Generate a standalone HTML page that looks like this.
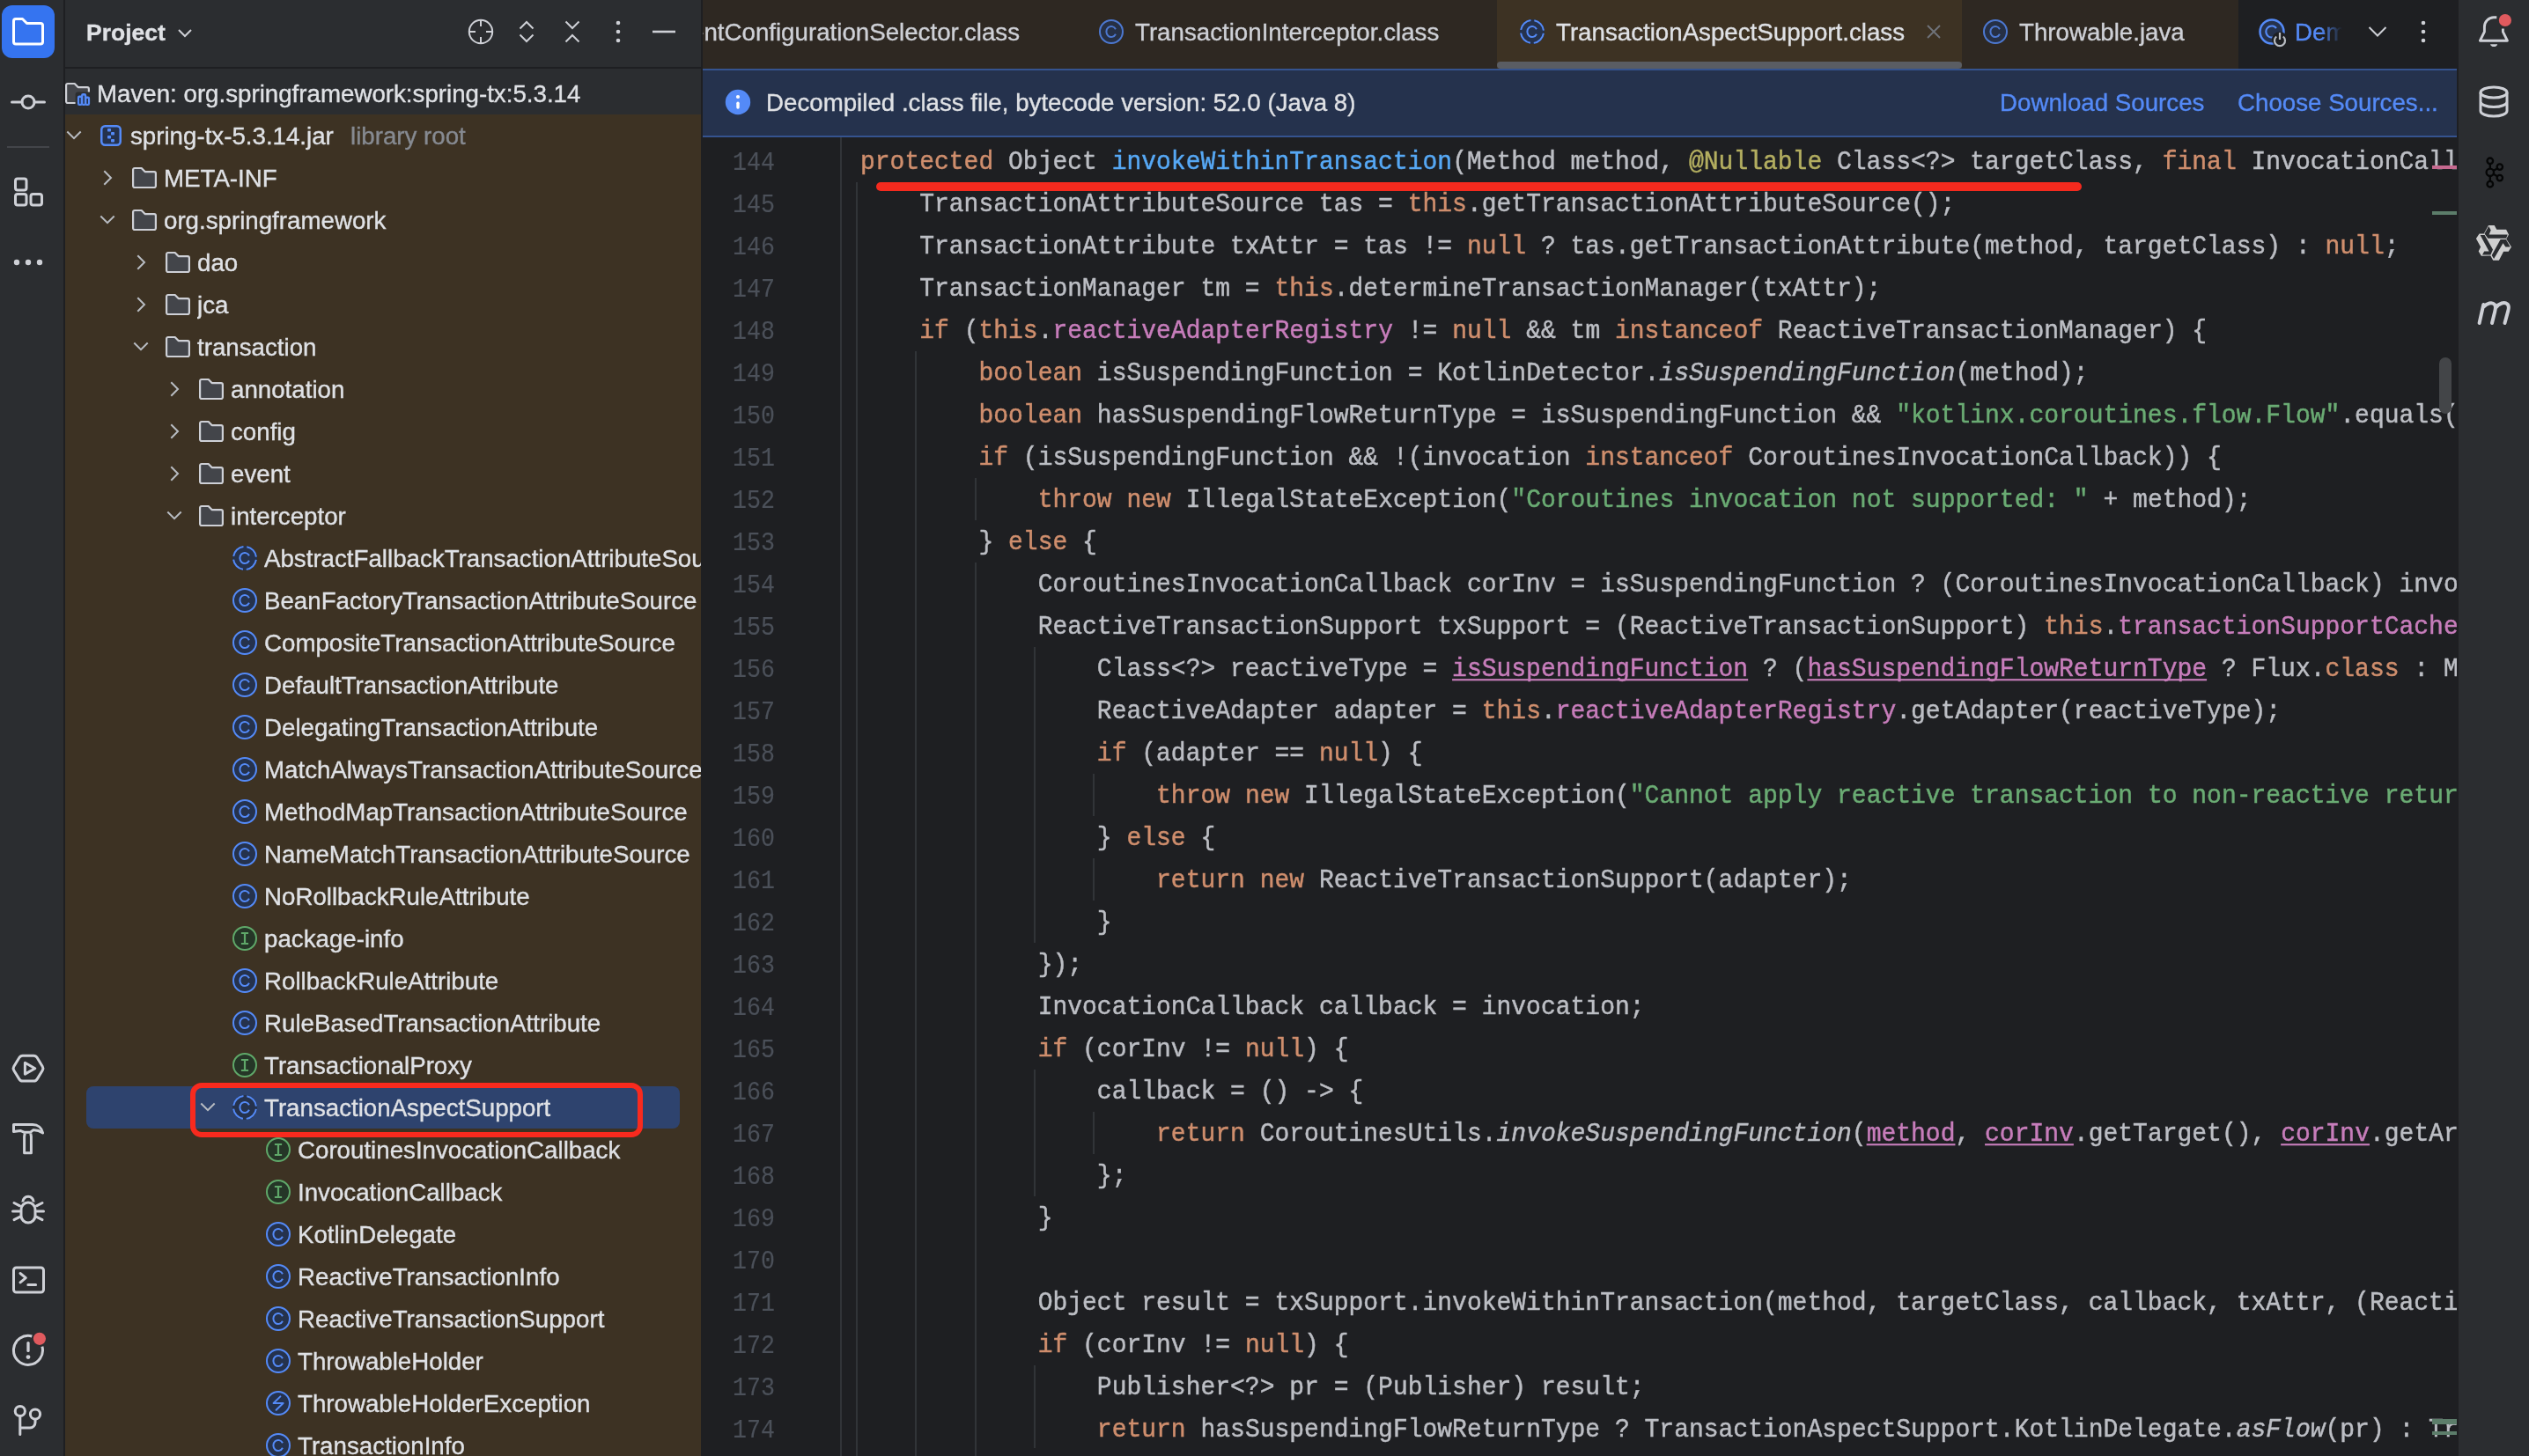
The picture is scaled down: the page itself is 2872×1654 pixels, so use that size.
<!DOCTYPE html><html><head><meta charset="utf-8"><style>
html,body{margin:0;padding:0;width:2872px;height:1654px;overflow:hidden;background:#1E1F22;}
.k{color:#CF8E6D} .d{color:#BCBEC4} .m{color:#56A8F5} .f{color:#C77DBB} .s{color:#6AAB73} .a{color:#B3AE60} .i{font-style:italic}
.cl{position:absolute;left:0;height:48px;white-space:pre;transform:scaleY(1.07);transform-origin:0 31.5px;-webkit-text-stroke:0.45px currentColor}
.u{color:#C77DBB;text-decoration:underline;text-underline-offset:3px;text-decoration-thickness:2px;text-decoration-skip-ink:none}
</style></head><body>
<div id="root" style="position:absolute;left:0;top:0;width:2872px;height:1654px;overflow:hidden;will-change:transform;-webkit-text-stroke:0.35px currentColor">

<svg width="0" height="0" style="position:absolute">
<defs>
<symbol id="folder" viewBox="0 0 32 32"><path d="M3.1 6.8a1.8 1.8 0 0 1 1.8-1.8H12.7l3.9 4.1H27.1a1.8 1.8 0 0 1 1.8 1.8V25.2a1.8 1.8 0 0 1-1.8 1.8H4.9a1.8 1.8 0 0 1-1.8-1.8z" fill="#43454A" stroke="#CED0D6" stroke-width="2.2" stroke-linejoin="round"/></symbol>
<symbol id="cls" viewBox="0 0 32 32"><circle cx="16" cy="16" r="13" fill="#25324D" stroke="#548AF7" stroke-width="2"/><path d="M20.95 13.2A5.6 6 0 1 0 20.95 18.8" fill="none" stroke="#548AF7" stroke-width="2"/></symbol>
<symbol id="abs" viewBox="0 0 32 32"><circle cx="16" cy="16" r="14" fill="#25324D"/><circle cx="16" cy="16" r="13" fill="none" stroke="#548AF7" stroke-width="2" stroke-dasharray="16.42 4" stroke-dashoffset="18.42"/><path d="M20.95 13.2A5.6 6 0 1 0 20.95 18.8" fill="none" stroke="#548AF7" stroke-width="2"/></symbol>
<symbol id="ifc" viewBox="0 0 32 32"><circle cx="16" cy="16" r="13" fill="#253627" stroke="#5FA869" stroke-width="2"/><path d="M11.9 10H20.1M16 10V22M11.9 22H20.1" fill="none" stroke="#5FA869" stroke-width="2.2"/></symbol>
<symbol id="exc" viewBox="0 0 32 32"><circle cx="16" cy="16" r="13" fill="#25324D" stroke="#548AF7" stroke-width="2"/><path d="M18.4 8.4L10.6 16H21.6L13.6 23.8" fill="none" stroke="#548AF7" stroke-width="2" stroke-linejoin="round" stroke-linecap="round"/></symbol>
<symbol id="chd" viewBox="0 0 32 32"><path d="M8.3 11.5L16 19.2L23.7 11.5" fill="none" stroke="#B8BCC2" stroke-width="2"/></symbol>
<symbol id="chr" viewBox="0 0 32 32"><path d="M12.3 8.3L20 16L12.3 23.7" fill="none" stroke="#B8BCC2" stroke-width="2"/></symbol>
</defs></svg><div style="position:absolute;left:0px;top:0px;width:72px;height:1654px;background:#2B2D30"></div><div style="position:absolute;left:72px;top:0px;width:2px;height:1654px;background:#1E1F22"></div><svg style="position:absolute;left:0px;top:0px;width:72px;height:1654px;" viewBox="0 0 72 1654">
<rect x="2" y="6" width="60" height="60" rx="12" fill="#3574F0"/>
<path d="M15.5 24a2.5 2.5 0 0 1 2.5-2.5h7.5l5 5h15.5a2.5 2.5 0 0 1 2.5 2.5V47.5a2.5 2.5 0 0 1-2.5 2.5H18a2.5 2.5 0 0 1-2.5-2.5z" fill="none" stroke="#fff" stroke-width="3" stroke-linejoin="round"/>
<circle cx="32" cy="116" r="7" fill="none" stroke="#CED0D6" stroke-width="3"/>
<path d="M13.5 116H25M39 116H50.5" stroke="#CED0D6" stroke-width="3" stroke-linecap="round"/>
<path d="M8 167H56" stroke="#43454A" stroke-width="2"/>
<rect x="17.5" y="203" width="12.5" height="13" rx="2.5" fill="none" stroke="#CED0D6" stroke-width="3"/>
<rect x="17.5" y="220.5" width="12.5" height="12.5" rx="2.5" fill="none" stroke="#CED0D6" stroke-width="3"/>
<rect x="35" y="220.5" width="12.5" height="12.5" rx="2.5" fill="none" stroke="#CED0D6" stroke-width="3"/>
<circle cx="19" cy="298" r="3.2" fill="#CED0D6"/><circle cx="32" cy="298" r="3.2" fill="#CED0D6"/><circle cx="45" cy="298" r="3.2" fill="#CED0D6"/>
<path d="M25.80 1199.30L38.20 1199.30Q40.80 1199.30 42.16 1201.52L48.24 1211.48Q49.60 1213.70 48.24 1215.92L42.16 1225.88Q40.80 1228.10 38.20 1228.10L25.80 1228.10Q23.20 1228.10 21.84 1225.88L15.76 1215.92Q14.40 1213.70 15.76 1211.48L21.84 1201.52Q23.20 1199.30 25.80 1199.30Z" fill="none" stroke="#CED0D6" stroke-width="3" stroke-linejoin="round"/>
<path d="M28.4 1207.3L39.8 1213.7L28.4 1220.1Z" fill="none" stroke="#CED0D6" stroke-width="3" stroke-linejoin="round"/>
<path d="M15.5 1277.6H37C43 1277.6 47.5 1281 48.6 1287C45 1284.6 41 1283.6 37.6 1283.8L34.6 1286.2H27.2L23 1284.4L15.5 1285.6Z" fill="none" stroke="#CED0D6" stroke-width="3" stroke-linejoin="round"/>
<path d="M28.2 1287.5L27.6 1291V1309.8H35.4V1291L34.8 1287.5" fill="none" stroke="#CED0D6" stroke-width="3" stroke-linejoin="round"/>
<path d="M25.8 1365.5A6.2 6.2 0 0 1 38.2 1365.5" fill="none" stroke="#CED0D6" stroke-width="3"/>
<rect x="24" y="1366" width="16" height="23" rx="8" fill="none" stroke="#CED0D6" stroke-width="3"/>
<path d="M16 1366.5L22.5 1369.8M14.5 1376H22M16 1385.6L22.5 1382.4M48 1366.5L41.5 1369.8M49.5 1376H42M48 1385.6L41.5 1382.4" stroke="#CED0D6" stroke-width="3" stroke-linecap="round"/>
<rect x="15.5" y="1440" width="34" height="28" rx="3" fill="none" stroke="#CED0D6" stroke-width="3"/>
<path d="M23 1446.5L29.3 1451.6L23 1456.8M31.8 1459.5H40.6" fill="none" stroke="#CED0D6" stroke-width="3" stroke-linecap="round" stroke-linejoin="round"/>
<path d="M36.3 1518A16.5 16.5 0 1 0 47.9 1529.7" fill="none" stroke="#CED0D6" stroke-width="3"/>
<path d="M32 1525.6V1534.4" stroke="#CED0D6" stroke-width="3.3" stroke-linecap="round"/><circle cx="32" cy="1541.6" r="2.4" fill="#CED0D6"/>
<circle cx="44.9" cy="1520.8" r="7.1" fill="#E05A5E"/>
<circle cx="22.8" cy="1603" r="5.6" fill="none" stroke="#CED0D6" stroke-width="3"/>
<circle cx="40" cy="1606.6" r="5.6" fill="none" stroke="#CED0D6" stroke-width="3"/>
<path d="M22.8 1608.6V1629.5M22.8 1622H34A6 6 0 0 0 40 1616V1612.2" fill="none" stroke="#CED0D6" stroke-width="3" stroke-linecap="round"/>
</svg><div style="position:absolute;left:74px;top:0px;width:722px;height:1654px;background:#2B2D30"></div><div style="position:absolute;left:74px;top:130px;width:722px;height:1524px;background:#3D3223"></div><div style="position:absolute;left:74px;top:76px;width:722px;height:2px;background:#1E1F22"></div><div style="position:absolute;left:796px;top:0px;width:2px;height:1654px;background:#1E1F22"></div><div style="position:absolute;left:98px;top:13px;width:200px;height:48px;font:bold 26.5px/48px 'Liberation Sans', sans-serif;color:#DFE1E5">Project</div><svg style="position:absolute;left:74px;top:0px;width:722px;height:76px;" viewBox="74 0 722 76">
<path d="M203 34L210 41L217 34" fill="none" stroke="#CED0D6" stroke-width="2"/>
<circle cx="546" cy="36" r="13.2" fill="none" stroke="#CED0D6" stroke-width="2"/>
<path d="M546 22.8V30M546 42V49.2M532.8 36H540M552 36H559.2" stroke="#CED0D6" stroke-width="2"/>
<path d="M590.5 32.5L598 25L605.5 32.5M590.5 39.5L598 47L605.5 39.5" fill="none" stroke="#CED0D6" stroke-width="2"/>
<path d="M642.5 24.5L650 32L657.5 24.5M642.5 47.5L650 40L657.5 47.5" fill="none" stroke="#CED0D6" stroke-width="2"/>
<circle cx="702" cy="26" r="2.3" fill="#CED0D6"/><circle cx="702" cy="36" r="2.3" fill="#CED0D6"/><circle cx="702" cy="46" r="2.3" fill="#CED0D6"/>
<path d="M741 36H767" stroke="#CED0D6" stroke-width="2.6"/>
</svg><div style="position:absolute;left:98px;top:1234px;width:674px;height:48px;background:#2E436E;border-radius:8px"></div><div style="position:absolute;left:74px;top:0px;width:722px;height:1654px;overflow:hidden"><div style="position:absolute;left:-74px;top:0;width:796px;height:1654px"><svg style="position:absolute;left:72px;top:90px;width:32px;height:32px;" viewBox="0 0 32 32"><path d="M3.1 6.8a1.8 1.8 0 0 1 1.8-1.8H12.7l3.9 4.1H27.1a1.8 1.8 0 0 1 1.8 1.8V25.2a1.8 1.8 0 0 1-1.8 1.8H4.9a1.8 1.8 0 0 1-1.8-1.8z" fill="#43454A" stroke="#CED0D6" stroke-width="2.2" stroke-linejoin="round"/>
<rect x="13.6" y="14.6" width="19" height="18" rx="3" fill="#2B2D30"/>
<rect x="15.9" y="18.6" width="6" height="11.4" rx="2.2" fill="#548AF7"/><rect x="20" y="16" width="6.2" height="14" rx="2.4" fill="#548AF7"/><rect x="24.2" y="19.6" width="5.9" height="10.4" rx="2.2" fill="#548AF7"/>
<rect x="18.1" y="21" width="1.6" height="6.8" fill="#25324D"/><rect x="22.3" y="18.6" width="1.6" height="9.2" fill="#25324D"/><rect x="26.4" y="22" width="1.6" height="5.8" fill="#25324D"/></svg><div style="position:absolute;left:110px;top:83px;width:686px;height:48px;font:27.7px/48px 'Liberation Sans', sans-serif;color:#DFE1E5;white-space:pre;overflow:hidden">Maven: org.springframework:spring-tx:5.3.14</div><svg style="position:absolute;left:68px;top:138px;width:32px;height:32px;" viewBox="0 0 32 32"><use href="#chd"/></svg><svg style="position:absolute;left:110px;top:138px;width:32px;height:32px;" viewBox="0 0 32 32"><rect x="5.25" y="5.25" width="21.5" height="21.5" rx="4" fill="#25324D" stroke="#548AF7" stroke-width="2.5"/>
<rect x="12" y="8" width="4" height="3.6" rx="0.8" fill="#548AF7"/><rect x="16" y="12" width="4" height="3.6" rx="0.8" fill="#548AF7"/><rect x="12" y="16" width="4" height="3.6" rx="0.8" fill="#548AF7"/><rect x="16" y="20" width="4" height="3.6" rx="0.8" fill="#548AF7"/></svg><div style="position:absolute;left:398px;top:131px;width:300px;height:48px;font:27.7px/48px 'Liberation Sans', sans-serif;color:#868A91;white-space:pre">library root</div><div style="position:absolute;left:148px;top:131px;width:648px;height:48px;font:27.7px/48px 'Liberation Sans', sans-serif;color:#DFE1E5;white-space:pre;overflow:hidden">spring-tx-5.3.14.jar</div><svg style="position:absolute;left:106px;top:186px;width:32px;height:32px;" viewBox="0 0 32 32"><use href="#chr"/></svg><svg style="position:absolute;left:148px;top:186px;width:32px;height:32px;" viewBox="0 0 32 32"><use href="#folder"/></svg><div style="position:absolute;left:186px;top:179px;width:610px;height:48px;font:27.7px/48px 'Liberation Sans', sans-serif;color:#DFE1E5;white-space:pre;overflow:hidden">META-INF</div><svg style="position:absolute;left:106px;top:234px;width:32px;height:32px;" viewBox="0 0 32 32"><use href="#chd"/></svg><svg style="position:absolute;left:148px;top:234px;width:32px;height:32px;" viewBox="0 0 32 32"><use href="#folder"/></svg><div style="position:absolute;left:186px;top:227px;width:610px;height:48px;font:27.7px/48px 'Liberation Sans', sans-serif;color:#DFE1E5;white-space:pre;overflow:hidden">org.springframework</div><svg style="position:absolute;left:144px;top:282px;width:32px;height:32px;" viewBox="0 0 32 32"><use href="#chr"/></svg><svg style="position:absolute;left:186px;top:282px;width:32px;height:32px;" viewBox="0 0 32 32"><use href="#folder"/></svg><div style="position:absolute;left:224px;top:275px;width:572px;height:48px;font:27.7px/48px 'Liberation Sans', sans-serif;color:#DFE1E5;white-space:pre;overflow:hidden">dao</div><svg style="position:absolute;left:144px;top:330px;width:32px;height:32px;" viewBox="0 0 32 32"><use href="#chr"/></svg><svg style="position:absolute;left:186px;top:330px;width:32px;height:32px;" viewBox="0 0 32 32"><use href="#folder"/></svg><div style="position:absolute;left:224px;top:323px;width:572px;height:48px;font:27.7px/48px 'Liberation Sans', sans-serif;color:#DFE1E5;white-space:pre;overflow:hidden">jca</div><svg style="position:absolute;left:144px;top:378px;width:32px;height:32px;" viewBox="0 0 32 32"><use href="#chd"/></svg><svg style="position:absolute;left:186px;top:378px;width:32px;height:32px;" viewBox="0 0 32 32"><use href="#folder"/></svg><div style="position:absolute;left:224px;top:371px;width:572px;height:48px;font:27.7px/48px 'Liberation Sans', sans-serif;color:#DFE1E5;white-space:pre;overflow:hidden">transaction</div><svg style="position:absolute;left:182px;top:426px;width:32px;height:32px;" viewBox="0 0 32 32"><use href="#chr"/></svg><svg style="position:absolute;left:224px;top:426px;width:32px;height:32px;" viewBox="0 0 32 32"><use href="#folder"/></svg><div style="position:absolute;left:262px;top:419px;width:534px;height:48px;font:27.7px/48px 'Liberation Sans', sans-serif;color:#DFE1E5;white-space:pre;overflow:hidden">annotation</div><svg style="position:absolute;left:182px;top:474px;width:32px;height:32px;" viewBox="0 0 32 32"><use href="#chr"/></svg><svg style="position:absolute;left:224px;top:474px;width:32px;height:32px;" viewBox="0 0 32 32"><use href="#folder"/></svg><div style="position:absolute;left:262px;top:467px;width:534px;height:48px;font:27.7px/48px 'Liberation Sans', sans-serif;color:#DFE1E5;white-space:pre;overflow:hidden">config</div><svg style="position:absolute;left:182px;top:522px;width:32px;height:32px;" viewBox="0 0 32 32"><use href="#chr"/></svg><svg style="position:absolute;left:224px;top:522px;width:32px;height:32px;" viewBox="0 0 32 32"><use href="#folder"/></svg><div style="position:absolute;left:262px;top:515px;width:534px;height:48px;font:27.7px/48px 'Liberation Sans', sans-serif;color:#DFE1E5;white-space:pre;overflow:hidden">event</div><svg style="position:absolute;left:182px;top:570px;width:32px;height:32px;" viewBox="0 0 32 32"><use href="#chd"/></svg><svg style="position:absolute;left:224px;top:570px;width:32px;height:32px;" viewBox="0 0 32 32"><use href="#folder"/></svg><div style="position:absolute;left:262px;top:563px;width:534px;height:48px;font:27.7px/48px 'Liberation Sans', sans-serif;color:#DFE1E5;white-space:pre;overflow:hidden">interceptor</div><svg style="position:absolute;left:262px;top:618px;width:32px;height:32px;" viewBox="0 0 32 32"><use href="#abs"/></svg><div style="position:absolute;left:300px;top:611px;width:496px;height:48px;font:27.7px/48px 'Liberation Sans', sans-serif;color:#DFE1E5;white-space:pre;overflow:hidden">AbstractFallbackTransactionAttributeSource</div><svg style="position:absolute;left:262px;top:666px;width:32px;height:32px;" viewBox="0 0 32 32"><use href="#cls"/></svg><div style="position:absolute;left:300px;top:659px;width:496px;height:48px;font:27.7px/48px 'Liberation Sans', sans-serif;color:#DFE1E5;white-space:pre;overflow:hidden">BeanFactoryTransactionAttributeSource</div><svg style="position:absolute;left:262px;top:714px;width:32px;height:32px;" viewBox="0 0 32 32"><use href="#cls"/></svg><div style="position:absolute;left:300px;top:707px;width:496px;height:48px;font:27.7px/48px 'Liberation Sans', sans-serif;color:#DFE1E5;white-space:pre;overflow:hidden">CompositeTransactionAttributeSource</div><svg style="position:absolute;left:262px;top:762px;width:32px;height:32px;" viewBox="0 0 32 32"><use href="#cls"/></svg><div style="position:absolute;left:300px;top:755px;width:496px;height:48px;font:27.7px/48px 'Liberation Sans', sans-serif;color:#DFE1E5;white-space:pre;overflow:hidden">DefaultTransactionAttribute</div><svg style="position:absolute;left:262px;top:810px;width:32px;height:32px;" viewBox="0 0 32 32"><use href="#cls"/></svg><div style="position:absolute;left:300px;top:803px;width:496px;height:48px;font:27.7px/48px 'Liberation Sans', sans-serif;color:#DFE1E5;white-space:pre;overflow:hidden">DelegatingTransactionAttribute</div><svg style="position:absolute;left:262px;top:858px;width:32px;height:32px;" viewBox="0 0 32 32"><use href="#cls"/></svg><div style="position:absolute;left:300px;top:851px;width:496px;height:48px;font:27.7px/48px 'Liberation Sans', sans-serif;color:#DFE1E5;white-space:pre;overflow:hidden">MatchAlwaysTransactionAttributeSource</div><svg style="position:absolute;left:262px;top:906px;width:32px;height:32px;" viewBox="0 0 32 32"><use href="#cls"/></svg><div style="position:absolute;left:300px;top:899px;width:496px;height:48px;font:27.7px/48px 'Liberation Sans', sans-serif;color:#DFE1E5;white-space:pre;overflow:hidden">MethodMapTransactionAttributeSource</div><svg style="position:absolute;left:262px;top:954px;width:32px;height:32px;" viewBox="0 0 32 32"><use href="#cls"/></svg><div style="position:absolute;left:300px;top:947px;width:496px;height:48px;font:27.7px/48px 'Liberation Sans', sans-serif;color:#DFE1E5;white-space:pre;overflow:hidden">NameMatchTransactionAttributeSource</div><svg style="position:absolute;left:262px;top:1002px;width:32px;height:32px;" viewBox="0 0 32 32"><use href="#cls"/></svg><div style="position:absolute;left:300px;top:995px;width:496px;height:48px;font:27.7px/48px 'Liberation Sans', sans-serif;color:#DFE1E5;white-space:pre;overflow:hidden">NoRollbackRuleAttribute</div><svg style="position:absolute;left:262px;top:1050px;width:32px;height:32px;" viewBox="0 0 32 32"><use href="#ifc"/></svg><div style="position:absolute;left:300px;top:1043px;width:496px;height:48px;font:27.7px/48px 'Liberation Sans', sans-serif;color:#DFE1E5;white-space:pre;overflow:hidden">package-info</div><svg style="position:absolute;left:262px;top:1098px;width:32px;height:32px;" viewBox="0 0 32 32"><use href="#cls"/></svg><div style="position:absolute;left:300px;top:1091px;width:496px;height:48px;font:27.7px/48px 'Liberation Sans', sans-serif;color:#DFE1E5;white-space:pre;overflow:hidden">RollbackRuleAttribute</div><svg style="position:absolute;left:262px;top:1146px;width:32px;height:32px;" viewBox="0 0 32 32"><use href="#cls"/></svg><div style="position:absolute;left:300px;top:1139px;width:496px;height:48px;font:27.7px/48px 'Liberation Sans', sans-serif;color:#DFE1E5;white-space:pre;overflow:hidden">RuleBasedTransactionAttribute</div><svg style="position:absolute;left:262px;top:1194px;width:32px;height:32px;" viewBox="0 0 32 32"><use href="#ifc"/></svg><div style="position:absolute;left:300px;top:1187px;width:496px;height:48px;font:27.7px/48px 'Liberation Sans', sans-serif;color:#DFE1E5;white-space:pre;overflow:hidden">TransactionalProxy</div><svg style="position:absolute;left:220px;top:1242px;width:32px;height:32px;" viewBox="0 0 32 32"><use href="#chd"/></svg><svg style="position:absolute;left:262px;top:1242px;width:32px;height:32px;" viewBox="0 0 32 32"><use href="#abs"/></svg><div style="position:absolute;left:300px;top:1235px;width:496px;height:48px;font:27.7px/48px 'Liberation Sans', sans-serif;color:#DFE1E5;white-space:pre;overflow:hidden">TransactionAspectSupport</div><svg style="position:absolute;left:300px;top:1290px;width:32px;height:32px;" viewBox="0 0 32 32"><use href="#ifc"/></svg><div style="position:absolute;left:338px;top:1283px;width:458px;height:48px;font:27.7px/48px 'Liberation Sans', sans-serif;color:#DFE1E5;white-space:pre;overflow:hidden">CoroutinesInvocationCallback</div><svg style="position:absolute;left:300px;top:1338px;width:32px;height:32px;" viewBox="0 0 32 32"><use href="#ifc"/></svg><div style="position:absolute;left:338px;top:1331px;width:458px;height:48px;font:27.7px/48px 'Liberation Sans', sans-serif;color:#DFE1E5;white-space:pre;overflow:hidden">InvocationCallback</div><svg style="position:absolute;left:300px;top:1386px;width:32px;height:32px;" viewBox="0 0 32 32"><use href="#cls"/></svg><div style="position:absolute;left:338px;top:1379px;width:458px;height:48px;font:27.7px/48px 'Liberation Sans', sans-serif;color:#DFE1E5;white-space:pre;overflow:hidden">KotlinDelegate</div><svg style="position:absolute;left:300px;top:1434px;width:32px;height:32px;" viewBox="0 0 32 32"><use href="#cls"/></svg><div style="position:absolute;left:338px;top:1427px;width:458px;height:48px;font:27.7px/48px 'Liberation Sans', sans-serif;color:#DFE1E5;white-space:pre;overflow:hidden">ReactiveTransactionInfo</div><svg style="position:absolute;left:300px;top:1482px;width:32px;height:32px;" viewBox="0 0 32 32"><use href="#cls"/></svg><div style="position:absolute;left:338px;top:1475px;width:458px;height:48px;font:27.7px/48px 'Liberation Sans', sans-serif;color:#DFE1E5;white-space:pre;overflow:hidden">ReactiveTransactionSupport</div><svg style="position:absolute;left:300px;top:1530px;width:32px;height:32px;" viewBox="0 0 32 32"><use href="#cls"/></svg><div style="position:absolute;left:338px;top:1523px;width:458px;height:48px;font:27.7px/48px 'Liberation Sans', sans-serif;color:#DFE1E5;white-space:pre;overflow:hidden">ThrowableHolder</div><svg style="position:absolute;left:300px;top:1578px;width:32px;height:32px;" viewBox="0 0 32 32"><use href="#exc"/></svg><div style="position:absolute;left:338px;top:1571px;width:458px;height:48px;font:27.7px/48px 'Liberation Sans', sans-serif;color:#DFE1E5;white-space:pre;overflow:hidden">ThrowableHolderException</div><svg style="position:absolute;left:300px;top:1626px;width:32px;height:32px;" viewBox="0 0 32 32"><use href="#cls"/></svg><div style="position:absolute;left:338px;top:1619px;width:458px;height:48px;font:27.7px/48px 'Liberation Sans', sans-serif;color:#DFE1E5;white-space:pre;overflow:hidden">TransactionInfo</div></div></div><div style="position:absolute;left:216px;top:1230.3px;width:514px;height:61.3px;box-sizing:border-box;border:6px solid #F82A1E;border-radius:13px"></div><div style="position:absolute;left:798px;top:0px;width:1992px;height:78px;background:#1E1F22"></div><div style="position:absolute;left:798px;top:0px;width:1744px;height:78px;background:#2E2822"></div><div style="position:absolute;left:1700px;top:0px;width:528px;height:78px;background:#3D3223"></div><div style="position:absolute;left:1700px;top:70px;width:528px;height:8px;background:#5A5D63;border-radius:4px"></div><div style="position:absolute;left:798px;top:0px;width:600px;height:78px;overflow:hidden"><div style="position:absolute;left:-641px;top:13px;width:1001px;height:48px;font:27.7px/48px 'Liberation Sans', sans-serif;color:#CED0D6;white-space:pre;text-align:right">TransactionManagementConfigurationSelector.class</div></div><svg style="position:absolute;left:1246px;top:20px;width:32px;height:32px;opacity:0.82" viewBox="0 0 32 32"><use href="#cls"/></svg><div style="position:absolute;left:1289px;top:13px;width:420px;height:48px;font:27.7px/48px 'Liberation Sans', sans-serif;color:#CED0D6;white-space:pre">TransactionInterceptor.class</div><svg style="position:absolute;left:1724px;top:20px;width:32px;height:32px;" viewBox="0 0 32 32"><use href="#abs"/></svg><div style="position:absolute;left:1767px;top:13px;width:420px;height:48px;font:27.7px/48px 'Liberation Sans', sans-serif;color:#DFE1E5;white-space:pre">TransactionAspectSupport.class</div><svg style="position:absolute;left:2180px;top:20px;width:32px;height:32px;" viewBox="0 0 32 32"><path d="M9 9L23 23M23 9L9 23" stroke="#6F737A" stroke-width="1.9"/></svg><svg style="position:absolute;left:2250px;top:20px;width:32px;height:32px;opacity:0.82" viewBox="0 0 32 32"><use href="#cls"/></svg><div style="position:absolute;left:2293px;top:13px;width:260px;height:48px;font:27.7px/48px 'Liberation Sans', sans-serif;color:#CED0D6;white-space:pre">Throwable.java</div><svg style="position:absolute;left:2560px;top:16px;width:44px;height:44px;" viewBox="0 0 44 44"><circle cx="20" cy="20" r="13.5" fill="#25324D" stroke="#548AF7" stroke-width="2.5"/>
<path d="M25 16A6.5 6.5 0 1 0 21 26.4" fill="none" stroke="#548AF7" stroke-width="2.2"/>
<circle cx="29" cy="29" r="9" fill="#1E1F22"/><path d="M25.2 25.5A6 6 0 1 0 32.8 25.5" fill="none" stroke="#B8BCC2" stroke-width="2.2"/><path d="M29 21V29" stroke="#B8BCC2" stroke-width="2.2"/></svg><div style="position:absolute;left:2606px;top:13px;width:54px;height:48px;font:27.7px/48px 'Liberation Sans', sans-serif;color:#548AF7;white-space:pre;overflow:hidden;-webkit-mask-image:linear-gradient(90deg,#000 55%,rgba(0,0,0,0.15) 92%,transparent 100%)">Demo</div><svg style="position:absolute;left:2680px;top:0px;width:110px;height:78px;" viewBox="2680 0 110 78"><path d="M2690.5 31L2700 40.5L2709.5 31" fill="none" stroke="#CED0D6" stroke-width="2"/>
<circle cx="2752" cy="26" r="2.3" fill="#CED0D6"/><circle cx="2752" cy="36" r="2.3" fill="#CED0D6"/><circle cx="2752" cy="46" r="2.3" fill="#CED0D6"/></svg><div style="position:absolute;left:798px;top:78px;width:1992px;height:78px;box-sizing:border-box;background:#25324D;border-top:2px solid #35538F;border-bottom:2px solid #35538F"></div><svg style="position:absolute;left:822px;top:100px;width:32px;height:32px;" viewBox="0 0 32 32"><circle cx="16" cy="16" r="14.2" fill="#548AF7"/><circle cx="16" cy="10" r="2.1" fill="#fff"/><path d="M16 17.2V22.1" stroke="#fff" stroke-width="3.4" stroke-linecap="round"/></svg><div style="position:absolute;left:870px;top:93px;width:900px;height:48px;font:27.7px/48px 'Liberation Sans', sans-serif;color:#DFE1E5;white-space:pre">Decompiled .class file, bytecode version: 52.0 (Java 8)</div><div style="position:absolute;left:2271px;top:93px;width:260px;height:48px;font:27.7px/48px 'Liberation Sans', sans-serif;color:#548AF7;white-space:pre">Download Sources</div><div style="position:absolute;left:2541px;top:93px;width:260px;height:48px;font:27.7px/48px 'Liberation Sans', sans-serif;color:#548AF7;white-space:pre">Choose Sources...</div><div style="position:absolute;left:798px;top:156px;width:1994px;height:1498px;background:#1E1F22"></div><div style="position:absolute;left:954px;top:156px;width:2px;height:1498px;background:#313438"></div><div style="position:absolute;left:2790px;top:0px;width:2px;height:1654px;background:#1E1F22"></div><div style="position:absolute;left:798px;top:161px;width:1992px;height:1493px;overflow:hidden"><div style="position:absolute;left:179px;top:0;font:28px/48px 'Liberation Mono', monospace;color:#BCBEC4"><div class="cl" style="top:0px"><span class="k">protected</span><span class="d"> Object </span><span class="m">invokeWithinTransaction</span><span class="d">(Method method, </span><span class="a">@Nullable</span><span class="d"> Class&lt;?&gt; targetClass, </span><span class="k">final</span><span class="d"> InvocationCallback invocation) throws Throwable {</span></div><div class="cl" style="top:48px"><span class="d">    TransactionAttributeSource tas = </span><span class="k">this</span><span class="d">.getTransactionAttributeSource();</span></div><div class="cl" style="top:96px"><span class="d">    TransactionAttribute txAttr = tas != </span><span class="k">null</span><span class="d"> ? tas.getTransactionAttribute(method, targetClass) : </span><span class="k">null</span><span class="d">;</span></div><div class="cl" style="top:144px"><span class="d">    TransactionManager tm = </span><span class="k">this</span><span class="d">.determineTransactionManager(txAttr);</span></div><div class="cl" style="top:192px"><span class="d">    </span><span class="k">if</span><span class="d"> (</span><span class="k">this</span><span class="d">.</span><span class="f">reactiveAdapterRegistry</span><span class="d"> != </span><span class="k">null</span><span class="d"> &amp;&amp; tm </span><span class="k">instanceof</span><span class="d"> ReactiveTransactionManager) {</span></div><div class="cl" style="top:240px"><span class="d">        </span><span class="k">boolean</span><span class="d"> isSuspendingFunction = KotlinDetector.</span><span class="i">isSuspendingFunction</span><span class="d">(method);</span></div><div class="cl" style="top:288px"><span class="d">        </span><span class="k">boolean</span><span class="d"> hasSuspendingFlowReturnType = isSuspendingFunction &amp;&amp; </span><span class="s">&quot;kotlinx.coroutines.flow.Flow&quot;</span><span class="d">.equals(method.getReturnType().getName());</span></div><div class="cl" style="top:336px"><span class="d">        </span><span class="k">if</span><span class="d"> (isSuspendingFunction &amp;&amp; !(invocation </span><span class="k">instanceof</span><span class="d"> CoroutinesInvocationCallback)) {</span></div><div class="cl" style="top:384px"><span class="d">            </span><span class="k">throw</span><span class="d"> </span><span class="k">new</span><span class="d"> IllegalStateException(</span><span class="s">&quot;Coroutines invocation not supported: &quot;</span><span class="d"> + method);</span></div><div class="cl" style="top:432px"><span class="d">        } </span><span class="k">else</span><span class="d"> {</span></div><div class="cl" style="top:480px"><span class="d">            CoroutinesInvocationCallback corInv = isSuspendingFunction ? (CoroutinesInvocationCallback) invocation : </span><span class="k">null</span><span class="d">;</span></div><div class="cl" style="top:528px"><span class="d">            ReactiveTransactionSupport txSupport = (ReactiveTransactionSupport) </span><span class="k">this</span><span class="d">.</span><span class="f">transactionSupportCache</span><span class="d">.computeIfAbsent(method, (key) -&gt; {</span></div><div class="cl" style="top:576px"><span class="d">                Class&lt;?&gt; reactiveType = </span><span class="u">isSuspendingFunction</span><span class="d"> ? (</span><span class="u">hasSuspendingFlowReturnType</span><span class="d"> ? Flux.</span><span class="k">class</span><span class="d"> : Mono.</span><span class="k">class</span><span class="d">) : method.getReturnType();</span></div><div class="cl" style="top:624px"><span class="d">                ReactiveAdapter adapter = </span><span class="k">this</span><span class="d">.</span><span class="f">reactiveAdapterRegistry</span><span class="d">.getAdapter(reactiveType);</span></div><div class="cl" style="top:672px"><span class="d">                </span><span class="k">if</span><span class="d"> (adapter == </span><span class="k">null</span><span class="d">) {</span></div><div class="cl" style="top:720px"><span class="d">                    </span><span class="k">throw</span><span class="d"> </span><span class="k">new</span><span class="d"> IllegalStateException(</span><span class="s">&quot;Cannot apply reactive transaction to non-reactive return type: &quot;</span><span class="d"> + method.getReturnType());</span></div><div class="cl" style="top:768px"><span class="d">                } </span><span class="k">else</span><span class="d"> {</span></div><div class="cl" style="top:816px"><span class="d">                    </span><span class="k">return</span><span class="d"> </span><span class="k">new</span><span class="d"> ReactiveTransactionSupport(adapter);</span></div><div class="cl" style="top:864px"><span class="d">                }</span></div><div class="cl" style="top:912px"><span class="d">            });</span></div><div class="cl" style="top:960px"><span class="d">            InvocationCallback callback = invocation;</span></div><div class="cl" style="top:1008px"><span class="d">            </span><span class="k">if</span><span class="d"> (corInv != </span><span class="k">null</span><span class="d">) {</span></div><div class="cl" style="top:1056px"><span class="d">                callback = () -&gt; {</span></div><div class="cl" style="top:1104px"><span class="d">                    </span><span class="k">return</span><span class="d"> CoroutinesUtils.</span><span class="i">invokeSuspendingFunction</span><span class="d">(</span><span class="u">method</span><span class="d">, </span><span class="u">corInv</span><span class="d">.getTarget(), </span><span class="u">corInv</span><span class="d">.getArguments());</span></div><div class="cl" style="top:1152px"><span class="d">                };</span></div><div class="cl" style="top:1200px"><span class="d">            }</span></div><div class="cl" style="top:1248px"></div><div class="cl" style="top:1296px"><span class="d">            Object result = txSupport.invokeWithinTransaction(method, targetClass, callback, txAttr, (ReactiveTransactionManager) tm);</span></div><div class="cl" style="top:1344px"><span class="d">            </span><span class="k">if</span><span class="d"> (corInv != </span><span class="k">null</span><span class="d">) {</span></div><div class="cl" style="top:1392px"><span class="d">                Publisher&lt;?&gt; pr = (Publisher) result;</span></div><div class="cl" style="top:1440px"><span class="d">                </span><span class="k">return</span><span class="d"> hasSuspendingFlowReturnType ? TransactionAspectSupport.KotlinDelegate.</span><span class="i">asFlow</span><span class="d">(pr) : TransactionAspectSupport.KotlinDelegate.</span><span class="i">awaitSingleOrNull</span><span class="d">(pr, corInv.getArguments()[corInv.getArguments().length - 1]);</span></div></div></div><div style="position:absolute;left:800px;top:162px;width:80px;height:1500px;font:28px/48px 'Liberation Mono', monospace;color:#4B5059"><div style="position:absolute;left:0;top:0px;width:80px;height:48px;text-align:right;transform:scale(0.95,1.06);transform-origin:79px 31.5px;-webkit-text-stroke:0.15px currentColor">144</div><div style="position:absolute;left:0;top:48px;width:80px;height:48px;text-align:right;transform:scale(0.95,1.06);transform-origin:79px 31.5px;-webkit-text-stroke:0.15px currentColor">145</div><div style="position:absolute;left:0;top:96px;width:80px;height:48px;text-align:right;transform:scale(0.95,1.06);transform-origin:79px 31.5px;-webkit-text-stroke:0.15px currentColor">146</div><div style="position:absolute;left:0;top:144px;width:80px;height:48px;text-align:right;transform:scale(0.95,1.06);transform-origin:79px 31.5px;-webkit-text-stroke:0.15px currentColor">147</div><div style="position:absolute;left:0;top:192px;width:80px;height:48px;text-align:right;transform:scale(0.95,1.06);transform-origin:79px 31.5px;-webkit-text-stroke:0.15px currentColor">148</div><div style="position:absolute;left:0;top:240px;width:80px;height:48px;text-align:right;transform:scale(0.95,1.06);transform-origin:79px 31.5px;-webkit-text-stroke:0.15px currentColor">149</div><div style="position:absolute;left:0;top:288px;width:80px;height:48px;text-align:right;transform:scale(0.95,1.06);transform-origin:79px 31.5px;-webkit-text-stroke:0.15px currentColor">150</div><div style="position:absolute;left:0;top:336px;width:80px;height:48px;text-align:right;transform:scale(0.95,1.06);transform-origin:79px 31.5px;-webkit-text-stroke:0.15px currentColor">151</div><div style="position:absolute;left:0;top:384px;width:80px;height:48px;text-align:right;transform:scale(0.95,1.06);transform-origin:79px 31.5px;-webkit-text-stroke:0.15px currentColor">152</div><div style="position:absolute;left:0;top:432px;width:80px;height:48px;text-align:right;transform:scale(0.95,1.06);transform-origin:79px 31.5px;-webkit-text-stroke:0.15px currentColor">153</div><div style="position:absolute;left:0;top:480px;width:80px;height:48px;text-align:right;transform:scale(0.95,1.06);transform-origin:79px 31.5px;-webkit-text-stroke:0.15px currentColor">154</div><div style="position:absolute;left:0;top:528px;width:80px;height:48px;text-align:right;transform:scale(0.95,1.06);transform-origin:79px 31.5px;-webkit-text-stroke:0.15px currentColor">155</div><div style="position:absolute;left:0;top:576px;width:80px;height:48px;text-align:right;transform:scale(0.95,1.06);transform-origin:79px 31.5px;-webkit-text-stroke:0.15px currentColor">156</div><div style="position:absolute;left:0;top:624px;width:80px;height:48px;text-align:right;transform:scale(0.95,1.06);transform-origin:79px 31.5px;-webkit-text-stroke:0.15px currentColor">157</div><div style="position:absolute;left:0;top:672px;width:80px;height:48px;text-align:right;transform:scale(0.95,1.06);transform-origin:79px 31.5px;-webkit-text-stroke:0.15px currentColor">158</div><div style="position:absolute;left:0;top:720px;width:80px;height:48px;text-align:right;transform:scale(0.95,1.06);transform-origin:79px 31.5px;-webkit-text-stroke:0.15px currentColor">159</div><div style="position:absolute;left:0;top:768px;width:80px;height:48px;text-align:right;transform:scale(0.95,1.06);transform-origin:79px 31.5px;-webkit-text-stroke:0.15px currentColor">160</div><div style="position:absolute;left:0;top:816px;width:80px;height:48px;text-align:right;transform:scale(0.95,1.06);transform-origin:79px 31.5px;-webkit-text-stroke:0.15px currentColor">161</div><div style="position:absolute;left:0;top:864px;width:80px;height:48px;text-align:right;transform:scale(0.95,1.06);transform-origin:79px 31.5px;-webkit-text-stroke:0.15px currentColor">162</div><div style="position:absolute;left:0;top:912px;width:80px;height:48px;text-align:right;transform:scale(0.95,1.06);transform-origin:79px 31.5px;-webkit-text-stroke:0.15px currentColor">163</div><div style="position:absolute;left:0;top:960px;width:80px;height:48px;text-align:right;transform:scale(0.95,1.06);transform-origin:79px 31.5px;-webkit-text-stroke:0.15px currentColor">164</div><div style="position:absolute;left:0;top:1008px;width:80px;height:48px;text-align:right;transform:scale(0.95,1.06);transform-origin:79px 31.5px;-webkit-text-stroke:0.15px currentColor">165</div><div style="position:absolute;left:0;top:1056px;width:80px;height:48px;text-align:right;transform:scale(0.95,1.06);transform-origin:79px 31.5px;-webkit-text-stroke:0.15px currentColor">166</div><div style="position:absolute;left:0;top:1104px;width:80px;height:48px;text-align:right;transform:scale(0.95,1.06);transform-origin:79px 31.5px;-webkit-text-stroke:0.15px currentColor">167</div><div style="position:absolute;left:0;top:1152px;width:80px;height:48px;text-align:right;transform:scale(0.95,1.06);transform-origin:79px 31.5px;-webkit-text-stroke:0.15px currentColor">168</div><div style="position:absolute;left:0;top:1200px;width:80px;height:48px;text-align:right;transform:scale(0.95,1.06);transform-origin:79px 31.5px;-webkit-text-stroke:0.15px currentColor">169</div><div style="position:absolute;left:0;top:1248px;width:80px;height:48px;text-align:right;transform:scale(0.95,1.06);transform-origin:79px 31.5px;-webkit-text-stroke:0.15px currentColor">170</div><div style="position:absolute;left:0;top:1296px;width:80px;height:48px;text-align:right;transform:scale(0.95,1.06);transform-origin:79px 31.5px;-webkit-text-stroke:0.15px currentColor">171</div><div style="position:absolute;left:0;top:1344px;width:80px;height:48px;text-align:right;transform:scale(0.95,1.06);transform-origin:79px 31.5px;-webkit-text-stroke:0.15px currentColor">172</div><div style="position:absolute;left:0;top:1392px;width:80px;height:48px;text-align:right;transform:scale(0.95,1.06);transform-origin:79px 31.5px;-webkit-text-stroke:0.15px currentColor">173</div><div style="position:absolute;left:0;top:1440px;width:80px;height:48px;text-align:right;transform:scale(0.95,1.06);transform-origin:79px 31.5px;-webkit-text-stroke:0.15px currentColor">174</div></div><div style="position:absolute;left:972.2px;top:207px;width:2px;height:1447px;background:#313438"></div><div style="position:absolute;left:1039.4px;top:399px;width:2px;height:1255px;background:#313438"></div><div style="position:absolute;left:1106.6000000000001px;top:543px;width:2px;height:48px;background:#313438"></div><div style="position:absolute;left:1106.6000000000001px;top:639px;width:2px;height:1015px;background:#313438"></div><div style="position:absolute;left:1173.8px;top:735px;width:2px;height:336px;background:#313438"></div><div style="position:absolute;left:1173.8px;top:1215px;width:2px;height:144px;background:#313438"></div><div style="position:absolute;left:1173.8px;top:1551px;width:2px;height:94px;background:#313438"></div><div style="position:absolute;left:1241.0px;top:879px;width:2px;height:48px;background:#313438"></div><div style="position:absolute;left:1241.0px;top:975px;width:2px;height:48px;background:#313438"></div><div style="position:absolute;left:1241.0px;top:1263px;width:2px;height:48px;background:#313438"></div><div style="position:absolute;left:995px;top:207px;width:1369px;height:9.5px;background:#F42A1E;border-radius:5px"></div><div style="position:absolute;left:2762px;top:188px;width:28px;height:4px;background:#C5698F"></div><div style="position:absolute;left:2762px;top:240px;width:28px;height:4px;background:#5C7D6A"></div><div style="position:absolute;left:2762px;top:1612px;width:28px;height:6px;background:#5C7D6A"></div><div style="position:absolute;left:2762px;top:1626px;width:28px;height:4px;background:#5C7D6A"></div><div style="position:absolute;left:2770px;top:406px;width:14px;height:64px;background:#434548;border-radius:7px"></div><div style="position:absolute;left:2792px;top:0px;width:80px;height:1654px;background:#2B2D30"></div><svg style="position:absolute;left:2792px;top:0px;width:80px;height:400px;" viewBox="2792 0 80 400">
<path d="M2835.3 19.8H2832A10.6 10.6 0 0 0 2821.4 30.4V36.2L2816.4 46.2H2847.4L2842.4 36.2V32.6" fill="none" stroke="#CED0D6" stroke-width="2.9" stroke-linejoin="round"/>
<path d="M2828 50.2A4.2 3.6 0 0 0 2836.2 50.2Z" fill="#CED0D6"/>
<circle cx="2844.9" cy="23" r="7.1" fill="#E05A5E"/>
<ellipse cx="2832" cy="105" rx="15" ry="6" fill="none" stroke="#CED0D6" stroke-width="3"/>
<path d="M2817 105V126A15 6 0 0 0 2847 126V105M2817 115.5A15 6 0 0 0 2847 115.5" fill="none" stroke="#CED0D6" stroke-width="3"/>
<circle cx="2827.8" cy="182.8" r="3.3" fill="none" stroke="#050606" stroke-width="2.3"/>
<circle cx="2827.8" cy="195.8" r="4.2" fill="none" stroke="#050606" stroke-width="2.3"/>
<circle cx="2827.8" cy="209.2" r="3.3" fill="none" stroke="#050606" stroke-width="2.3"/>
<circle cx="2838.8" cy="189.6" r="3.2" fill="none" stroke="#050606" stroke-width="2.3"/>
<circle cx="2838.8" cy="202.1" r="3.2" fill="none" stroke="#050606" stroke-width="2.3"/>
<path d="M2827.8 186.2V191.5M2827.8 200V205.8M2831.6 193.8L2836 191.4M2831.6 197.8L2836 200.2" stroke="#050606" stroke-width="2.3"/>
<polygon points="2826.0,256.0 2832.7,256.0 2835.3,260.8 2846.1,260.8 2849.0,266.5 2846.2,271.4 2852.0,280.6 2848.7,285.8 2843.1,285.8 2837.9,295.8 2831.2,295.8 2828.3,290.5 2817.9,290.7 2814.7,285.5 2817.1,280.6 2811.9,271.0 2815.6,265.4 2820.8,265.4" fill="#CFCFCF"/><polygon points="2826.3,257.1 2828.7,261.6 2826.6,266.4 2847.7,266.5 2846.1,270.7 2825.4,270.7 2821.5,265.4" fill="#2B2D30"/><polygon points="2816.6,267.1 2821.6,267.1 2831.0,283.4 2828.4,289.4 2819.0,289.4 2821.2,285.5 2826.6,285.5" fill="#2B2D30"/><polygon points="2839.6,272.1 2845.9,272.1 2850.7,280.6 2845.4,280.6 2842.5,276.3 2832.1,294.0 2829.7,289.9" fill="#2B2D30"/>
</svg><svg style="position:absolute;left:2792px;top:320px;width:80px;height:60px;" viewBox="2792 320 80 60"><path d="M2815.6 367L2820.3 346M2820.6 348.5C2824 344.5 2830 342.5 2833 346C2834.5 348 2834 351 2833.2 354L2830 367M2834.3 349.5C2838 344.5 2844 342.5 2847.5 345.5C2849.5 347.5 2849 350.5 2848.3 353L2844.5 367" fill="none" stroke="#CED0D6" stroke-width="4" stroke-linecap="round" stroke-linejoin="round"/></svg>
</div>
</body></html>
